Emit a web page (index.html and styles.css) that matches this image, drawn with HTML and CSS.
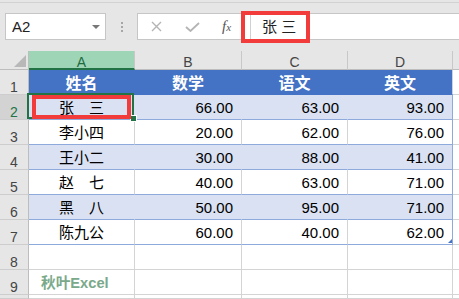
FILE: index.html
```html
<!DOCTYPE html>
<html lang="zh-CN">
<head>
<meta charset="utf-8">
<title>Sheet</title>
<link rel="stylesheet" href="styles.css">
</head>
<body>
<div class="app">
  <div class="toolbar">
    <div class="namebox"><span class="ref">A2</span><span class="caret"></span></div>
    <div class="grip"><i></i><i></i><i></i></div>
    <div class="fbar">
      <div class="fbtns">
        <svg class="ic-x" width="11" height="11" viewBox="0 0 11 11"><path d="M1 1L10 10M10 1L1 10" stroke="#b4b4b4" stroke-width="1.4" fill="none"/></svg>
        <svg class="ic-ok" width="15" height="10" viewBox="0 0 15 10"><path d="M1 5L5.5 9L14 1" stroke="#b4b4b4" stroke-width="1.8" fill="none"/></svg>
        <span class="fx">f<span class="fx-sub">x</span></span>
      </div>
      <div class="fsep"></div>
      <div class="finput">张 三</div>
    </div>
    <div class="mark mark-formula"></div>
  </div>

  <div class="sheet">
    <div class="corner"><span class="corner-tri"></span></div>
    <div class="ch sel">A</div>
    <div class="ch">B</div>
    <div class="ch">C</div>
    <div class="ch">D</div>
    <div class="ch ch-e"></div>

    <div class="rh">1</div>
    <div class="c th">姓名</div>
    <div class="c th">数学</div>
    <div class="c th">语文</div>
    <div class="c th last">英文</div>
    <div class="c e"></div>

    <div class="rh sel">2</div>
    <div class="c band name active">张　三<span class="selbox"></span><span class="handle"></span><span class="mark mark-cell"></span></div>
    <div class="c band num">66.00</div>
    <div class="c band num">63.00</div>
    <div class="c band num last">93.00</div>
    <div class="c e"></div>

    <div class="rh">3</div>
    <div class="c row name">李小四</div>
    <div class="c row num">20.00</div>
    <div class="c row num">62.00</div>
    <div class="c row num last">76.00</div>
    <div class="c e"></div>

    <div class="rh">4</div>
    <div class="c band name">王小二</div>
    <div class="c band num">30.00</div>
    <div class="c band num">88.00</div>
    <div class="c band num last">41.00</div>
    <div class="c e"></div>

    <div class="rh">5</div>
    <div class="c row name">赵　七</div>
    <div class="c row num">40.00</div>
    <div class="c row num">63.00</div>
    <div class="c row num last">71.00</div>
    <div class="c e"></div>

    <div class="rh">6</div>
    <div class="c band name">黑　八</div>
    <div class="c band num">50.00</div>
    <div class="c band num">95.00</div>
    <div class="c band num last">71.00</div>
    <div class="c e"></div>

    <div class="rh">7</div>
    <div class="c row name">陈九公</div>
    <div class="c row num">60.00</div>
    <div class="c row num">40.00</div>
    <div class="c row num last corner-cell">62.00<span class="resize"></span></div>
    <div class="c e"></div>

    <div class="rh">8</div>
    <div class="c"></div>
    <div class="c"></div>
    <div class="c"></div>
    <div class="c"></div>
    <div class="c e"></div>

    <div class="rh">9</div>
    <div class="c brand">秋叶Excel</div>
    <div class="c"></div>
    <div class="c"></div>
    <div class="c"></div>
    <div class="c e"></div>

    <div class="rh"></div>
    <div class="c"></div>
    <div class="c"></div>
    <div class="c"></div>
    <div class="c"></div>
    <div class="c e"></div>
  </div>
</div>
</body>
</html>
```
FILE: styles.css
```css
* { box-sizing: border-box; margin: 0; padding: 0; }
html, body { width: 459px; height: 299px; overflow: hidden; }
body {
  background: #e6e6e6;
  font-family: "Liberation Sans", "Noto Sans CJK SC", sans-serif;
  color: #000;
}
.app {
  width: 459px;
  height: 299px;
  display: flex;
  flex-direction: column;
  overflow: hidden;
  padding-top: 2px;
}

/* toolbar */
.toolbar {
  position: relative;
  flex: none;
  height: 49px;
  border-top: 1px solid #d2d2d2;
  padding-top: 10px;
  display: flex;
  align-items: flex-start;
}
.namebox {
  margin-left: 5px;
  width: 101px;
  height: 27px;
  border: 1px solid #c6c6c6;
  background: #fff;
  display: flex;
  align-items: center;
  padding: 0 5px 0 6px;
}
.ref { font-size: 15px; line-height: 16px; color: #222; }
.caret {
  margin-left: auto;
  width: 0; height: 0;
  border-left: 4px solid transparent;
  border-right: 4px solid transparent;
  border-top: 4px solid #777;
}
.grip {
  margin-left: 15px;
  margin-top: 9px;
  display: flex;
  flex-direction: column;
  gap: 2px;
}
.grip i { display: block; width: 2px; height: 2px; background: #a6a6a6; }
.fbar {
  margin-left: 14px;
  margin-right: -2px;
  flex: 1;
  height: 27px;
  border: 1px solid #c6c6c6;
  background: #fff;
  display: flex;
  align-items: center;
}
.fbtns {
  width: 112px;
  height: 100%;
  display: flex;
  align-items: center;
  padding-left: 13px;
}
.ic-ok { margin-left: 23px; }
.fx {
  margin-left: 22px;
  font-family: "Liberation Serif", serif;
  font-style: italic;
  font-size: 15px;
  line-height: 16px;
  color: #555;
}
.fx-sub { font-size: 11px; }
.fsep { width: 1px; align-self: stretch; background: #d0d0d0; }
.finput {
  padding-left: 11px;
  font-size: 15px;
  line-height: 16px;
  color: #222;
}
.mark { position: absolute; border: 4px solid #f23b3b; }
.mark-formula { left: 241px; top: 8px; width: 69px; height: 32px; }

/* sheet grid */
.sheet {
  flex: 1;
  display: grid;
  grid-template-columns: 29px 106px 107px 106px 105px 1fr;
  grid-template-rows: 19px repeat(9, 25px) 1fr;
  background: #fff;
}
.corner {
  background: #e6e6e6;
  border-right: 1px solid #bdbdbd;
  border-bottom: 1px solid #bdbdbd;
  display: flex;
  justify-content: flex-end;
  align-items: flex-end;
  padding: 0 2px 2px 0;
}
.corner-tri {
  width: 0; height: 0;
  border-left: 12px solid transparent;
  border-bottom: 12px solid #b8b8b8;
}
.ch {
  background: #e6e6e6;
  border-right: 1px solid #c8c8c8;
  border-bottom: 1px solid #bdbdbd;
  display: flex;
  justify-content: center;
  align-items: flex-end;
  font-size: 14px;
  line-height: 14px;
  color: #444;
}
.ch.sel {
  background: #9fd5b7;
  color: #1e6b41;
  border-bottom: 2px solid #217346;
  line-height: 12px;
}
.ch-e { border-right: none; }
.rh {
  background: #e6e6e6;
  border-right: 1px solid #bdbdbd;
  border-bottom: 1px solid #cdcdcd;
  display: flex;
  justify-content: center;
  align-items: flex-end;
  font-size: 14px;
  line-height: 14px;
  color: #444;
}
.rh.sel { background: #d3d3d3; color: #217346; }

.c {
  border-right: 1px solid #d4d4d4;
  border-bottom: 1px solid #d4d4d4;
  display: flex;
  align-items: flex-end;
  font-size: 15px;
  line-height: 16px;
  padding-bottom: 3px;
  white-space: nowrap;
}
.c.e { border-right: none; }
.th {
  background: #4472c4;
  border-right-color: #4472c4;
  border-bottom-color: #4472c4;
  color: #fff;
  font-weight: bold;
  font-size: 16px;
  justify-content: center;
  padding-bottom: 2px;
}
.band {
  background: #d9e1f2;
  border-right-color: #d9e1f2;
  border-bottom-color: #8ea9db;
}
.row { border-bottom-color: #8ea9db; }
.c.last { border-right-color: #8ea9db; }
.th.last { border-right-color: #c9d3e8; }
.name { justify-content: center; }
.num { justify-content: flex-end; padding-right: 8px; }
.brand {
  color: #7aa98a;
  font-weight: bold;
  font-size: 14.67px;
  padding-left: 12px;
}

.active { position: relative; }
.selbox {
  position: absolute;
  left: -2px; top: -2px; right: 0; bottom: 0;
  border: 2px solid #217346;
}
.handle {
  position: absolute;
  right: -3px; bottom: -3px;
  width: 7px; height: 7px;
  background: #217346;
  border: 1px solid #fff;
}
.mark-cell { left: 3px; top: 0; width: 99px; height: 24px; }
.corner-cell { position: relative; }
.resize {
  position: absolute;
  right: 0; bottom: 1px;
  width: 0; height: 0;
  border-left: 4px solid transparent;
  border-bottom: 4px solid #4472c4;
}
```
